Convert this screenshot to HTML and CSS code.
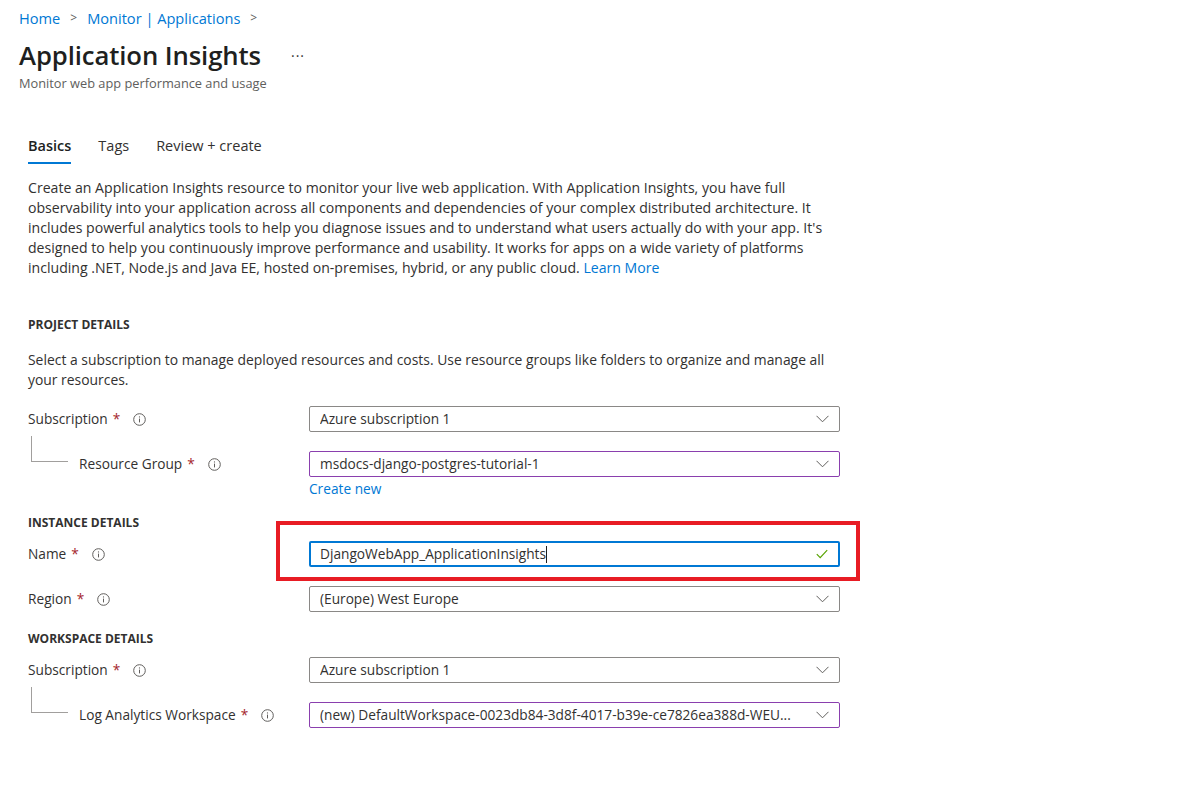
FILE: index.html
```html
<!DOCTYPE html>
<html lang="en">
<head>
<meta charset="utf-8">
<title>Application Insights</title>
<link rel="stylesheet" href="styles.css">
</head>
<body>
<div class="page">
  <header class="header">
    <nav class="breadcrumb">
      <a href="#">Home</a>
      <span class="sep">&gt;</span>
      <a href="#">Monitor | Applications</a>
      <span class="sep">&gt;</span>
    </nav>
    <div class="title-row">
      <h1 class="title">Application Insights</h1>
      <span class="more">&middot;&middot;&middot;</span>
    </div>
    <div class="subtitle">Monitor web app performance and usage</div>
  </header>

  <main class="content">
    <div class="tabs">
      <span class="tab active">Basics</span>
      <span class="tab">Tags</span>
      <span class="tab">Review + create</span>
    </div>

    <p class="desc">Create an Application Insights resource to monitor your live web application. With Application Insights, you have full observability into your application across all components and dependencies of your complex distributed architecture. It includes powerful analytics tools to help you diagnose issues and to understand what users actually do with your app. It's designed to help you continuously improve performance and usability. It works for apps on a wide variety of platforms including .NET, Node.js and Java EE, hosted on-premises, hybrid, or any public cloud. <a class="learn" href="#">Learn More</a></p>

    <h2 class="section section-project">PROJECT DETAILS</h2>
    <p class="section-desc">Select a subscription to manage deployed resources and costs. Use resource groups like folders to organize and manage all your resources.</p>

    <div class="row">
      <div class="label">Subscription <span class="req">*</span><span class="info"><svg width="13" height="13" viewBox="0 0 13 13"><circle cx="6.5" cy="6.5" r="5.8" fill="none" stroke="#605e5c" stroke-width="1"/><path d="M6.5 5.6v3.8" stroke="#605e5c" stroke-width="1"/><circle cx="6.5" cy="3.9" r="0.6" fill="#605e5c"/></svg></span></div>
      <div class="select"><span class="value">Azure subscription 1</span><svg class="chev" width="13" height="8" viewBox="0 0 13 8"><path d="M0.5 0.8 L6.5 6.8 L12.5 0.8" fill="none" stroke="#605e5c" stroke-width="1"/></svg></div>
    </div>
    <div class="row row-sub">
      <div class="label child"><span class="tree"></span>Resource Group <span class="req">*</span><span class="info"><svg width="13" height="13" viewBox="0 0 13 13"><circle cx="6.5" cy="6.5" r="5.8" fill="none" stroke="#605e5c" stroke-width="1"/><path d="M6.5 5.6v3.8" stroke="#605e5c" stroke-width="1"/><circle cx="6.5" cy="3.9" r="0.6" fill="#605e5c"/></svg></span></div>
      <div class="field">
        <div class="select purple"><span class="value">msdocs-django-postgres-tutorial-1</span><svg class="chev" width="13" height="8" viewBox="0 0 13 8"><path d="M0.5 0.8 L6.5 6.8 L12.5 0.8" fill="none" stroke="#605e5c" stroke-width="1"/></svg></div>
        <a class="create" href="#">Create new</a>
      </div>
    </div>

    <h2 class="section section-instance">INSTANCE DETAILS</h2>
    <div class="row row-name">
      <div class="label">Name <span class="req">*</span><span class="info"><svg width="13" height="13" viewBox="0 0 13 13"><circle cx="6.5" cy="6.5" r="5.8" fill="none" stroke="#605e5c" stroke-width="1"/><path d="M6.5 5.6v3.8" stroke="#605e5c" stroke-width="1"/><circle cx="6.5" cy="3.9" r="0.6" fill="#605e5c"/></svg></span></div>
      <div class="field name-field">
        <div class="input focus"><span class="value">DjangoWebApp_ApplicationInsights<span class="caret"></span></span><svg class="check" width="12" height="10" viewBox="0 0 12 10"><path d="M0.8 5.2 L4.2 8.6 L11.2 1.2" fill="none" stroke="#57a300" stroke-width="1.2"/></svg></div>
        <div class="highlight"></div>
      </div>
    </div>
    <div class="row row-gap">
      <div class="label">Region <span class="req">*</span><span class="info"><svg width="13" height="13" viewBox="0 0 13 13"><circle cx="6.5" cy="6.5" r="5.8" fill="none" stroke="#605e5c" stroke-width="1"/><path d="M6.5 5.6v3.8" stroke="#605e5c" stroke-width="1"/><circle cx="6.5" cy="3.9" r="0.6" fill="#605e5c"/></svg></span></div>
      <div class="select"><span class="value">(Europe) West Europe</span><svg class="chev" width="13" height="8" viewBox="0 0 13 8"><path d="M0.5 0.8 L6.5 6.8 L12.5 0.8" fill="none" stroke="#605e5c" stroke-width="1"/></svg></div>
    </div>

    <h2 class="section section-workspace">WORKSPACE DETAILS</h2>
    <div class="row">
      <div class="label">Subscription <span class="req">*</span><span class="info"><svg width="13" height="13" viewBox="0 0 13 13"><circle cx="6.5" cy="6.5" r="5.8" fill="none" stroke="#605e5c" stroke-width="1"/><path d="M6.5 5.6v3.8" stroke="#605e5c" stroke-width="1"/><circle cx="6.5" cy="3.9" r="0.6" fill="#605e5c"/></svg></span></div>
      <div class="select"><span class="value">Azure subscription 1</span><svg class="chev" width="13" height="8" viewBox="0 0 13 8"><path d="M0.5 0.8 L6.5 6.8 L12.5 0.8" fill="none" stroke="#605e5c" stroke-width="1"/></svg></div>
    </div>
    <div class="row row-sub">
      <div class="label child"><span class="tree"></span>Log Analytics Workspace <span class="req">*</span><span class="info"><svg width="13" height="13" viewBox="0 0 13 13"><circle cx="6.5" cy="6.5" r="5.8" fill="none" stroke="#605e5c" stroke-width="1"/><path d="M6.5 5.6v3.8" stroke="#605e5c" stroke-width="1"/><circle cx="6.5" cy="3.9" r="0.6" fill="#605e5c"/></svg></span></div>
      <div class="select purple"><span class="value">(new) DefaultWorkspace-0023db84-3d8f-4017-b39e-ce7826ea388d-WEU...</span><svg class="chev" width="13" height="8" viewBox="0 0 13 8"><path d="M0.5 0.8 L6.5 6.8 L12.5 0.8" fill="none" stroke="#605e5c" stroke-width="1"/></svg></div>
    </div>
  </main>
</div>
</body>
</html>
```

FILE: styles.css
```css
* { box-sizing: border-box; }
html, body { margin: 0; padding: 0; background: #fff; }
body {
  font-family: "Open Sans", "Noto Sans", sans-serif;
  font-size: 13.7px;
  color: #323130;
}
a { color: #0078d4; text-decoration: none; }

.page { width: 1182px; height: 806px; overflow: hidden; }

.header { padding: 8px 0 0 19px; }
.breadcrumb { display: flex; align-items: center; height: 20px; font-size: 14.6px; line-height: 20px; }
.breadcrumb .sep { color: #605e5c; margin: 0 10px 0 10px; font-size: 12px; }
.title-row { display: flex; align-items: center; margin-top: 12px; height: 32px; }
.title { margin: 0; font-size: 25.7px; font-weight: 600; line-height: 32px; color: #201f1e; letter-spacing: -0.1px; }
.more { margin-left: 30px; font-size: 14px; color: #323130; letter-spacing: 1px; line-height: 32px; }
.subtitle { margin-top: 3px; font-size: 12.8px; line-height: 16px; color: #605e5c; }

.content { padding: 0 0 0 28px; width: 840px; }

.tabs { display: flex; margin-top: 45px; height: 28px; }
.tab { font-size: 14.5px; line-height: 20px; margin-right: 27px; color: #323130; position: relative; height: 28px; }
.tab.active { font-weight: 600; color: #201f1e; }
.tab.active::after { content: ""; position: absolute; left: 0; right: 0; top: 26px; height: 2px; background: #0078d4; }

.desc { margin: 14px 0 0 0; font-size: 14.1px; line-height: 20px; width: 812px; }

.section { margin: 0; font-size: 12px; font-weight: 700; line-height: 16px; color: #323130; }
.section-project { margin-top: 39px; }
.section-desc { margin: 17px 0 0 0; font-size: 13.9px; line-height: 20px; width: 812px; }

.row { display: flex; align-items: flex-start; }
.section-desc + .row { margin-top: 16px; }
.row-sub { margin-top: 19px; }
.section + .row { margin-top: 10px; }
.row-gap { margin-top: 19px; }

.label { width: 281px; flex: none; display: flex; align-items: center; height: 26px; line-height: 20px; position: relative; }
.label.child { padding-left: 51px; }
.tree { position: absolute; left: 3px; top: -15px; width: 37px; height: 26px; border-left: 1px solid #a19f9d; border-bottom: 1px solid #a19f9d; }
.req { color: #a4262c; margin-left: 5px; }
.info { display: inline-flex; margin-left: 13px; }

.field { display: flex; flex-direction: column; width: 531px; position: relative; }
.select, .input {
  width: 531px; height: 26px; border: 1px solid #8a8886; border-radius: 2px;
  display: flex; align-items: center; justify-content: space-between;
  padding: 0 10px 0 10px; line-height: 20px; color: #323130;
}
.select.purple { border-color: #8a3fae; }
.input.focus { border: 2px solid #0078d4; padding-left: 9px; }
.value { white-space: nowrap; overflow: hidden; }
.chev { flex: none; }
.check { flex: none; }
.caret { display: inline-block; width: 1px; height: 17px; background: #201f1e; vertical-align: -4px; }
.create { line-height: 20px; margin-top: 2px; }

.section-instance { margin-top: 16px; }
.section-workspace { margin-top: 19px; }

.highlight {
  position: absolute; left: -33px; top: -20px; width: 584px; height: 60px;
  border: 4px solid #e81c24;
}
```
